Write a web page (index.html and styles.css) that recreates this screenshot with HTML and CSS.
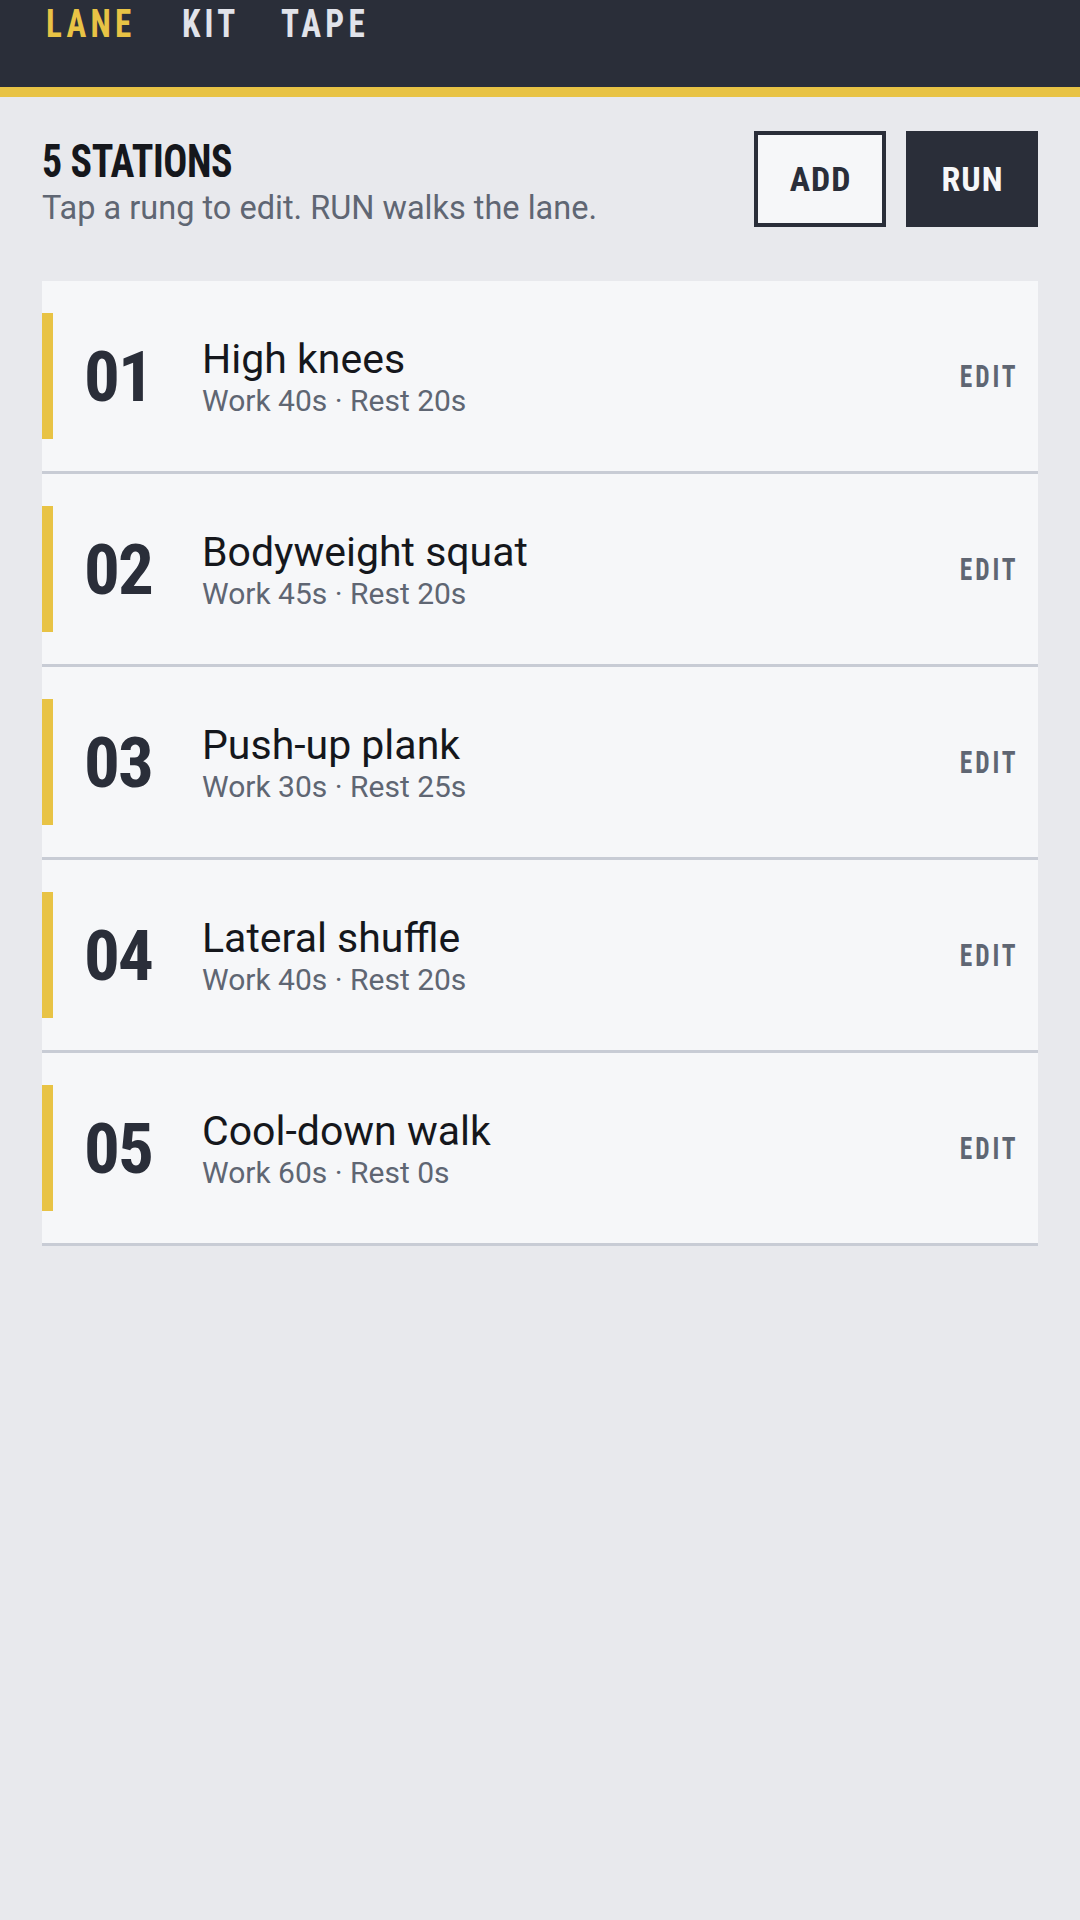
FILE: index.html
```html
<!DOCTYPE html>
<html lang="en">
<head>
<meta charset="utf-8">
<title>Lane</title>
<link rel="stylesheet" href="styles.css">
</head>
<body>
<header class="topbar">
  <nav class="tabs">
    <span class="tab tab-active">LANE</span>
    <span class="tab">KIT</span>
    <span class="tab">TAPE</span>
  </nav>
</header>
<main class="page">
  <section class="toolbar">
    <div class="intro">
      <h1 class="count">5 STATIONS</h1>
      <p class="hint">Tap a rung to edit. RUN walks the lane.</p>
    </div>
    <div class="actions">
      <button class="btn btn-outline">ADD</button>
      <button class="btn btn-solid">RUN</button>
    </div>
  </section>
  <ol class="rungs">
    <li class="rung"><div class="rung-inner"><span class="num">01</span><div class="info"><div class="name">High knees</div><div class="meta">Work 40s · Rest 20s</div></div><span class="edit">EDIT</span></div></li>
    <li class="rung"><div class="rung-inner"><span class="num">02</span><div class="info"><div class="name">Bodyweight squat</div><div class="meta">Work 45s · Rest 20s</div></div><span class="edit">EDIT</span></div></li>
    <li class="rung"><div class="rung-inner"><span class="num">03</span><div class="info"><div class="name">Push-up plank</div><div class="meta">Work 30s · Rest 25s</div></div><span class="edit">EDIT</span></div></li>
    <li class="rung"><div class="rung-inner"><span class="num">04</span><div class="info"><div class="name">Lateral shuffle</div><div class="meta">Work 40s · Rest 20s</div></div><span class="edit">EDIT</span></div></li>
    <li class="rung"><div class="rung-inner"><span class="num">05</span><div class="info"><div class="name">Cool-down walk</div><div class="meta">Work 60s · Rest 0s</div></div><span class="edit">EDIT</span></div></li>
  </ol>
</main>
</body>
</html>
```
FILE: styles.css
```css
* { box-sizing: border-box; }
html, body { margin: 0; padding: 0; }
body {
  background: #e8e9ed;
  font-family: Roboto, "Liberation Sans", sans-serif;
  color: #15171c;
  min-height: 1920px;
}
.topbar {
  height: 97px;
  background: #2a2e39;
  border-bottom: 10px solid #e8c345;
}
.tabs {
  display: flex;
  gap: 31px;
  padding-left: 46px;
  padding-top: 4px;
}
.tab, .count, .btn, .num, .edit {
  font-family: Roboto, "Liberation Sans", sans-serif;
  font-stretch: 75%;
  font-weight: 700;
}
.tab {
  display: inline-block;
  font-size: 39px;
  line-height: 40px;
  letter-spacing: 5px;
  color: #e1e3ea;
  transform: scaleX(0.85);
  transform-origin: left center;
}
.tab-active { color: #e8c345; }
.page { padding: 34px 42px 0; }
.toolbar {
  display: flex;
  justify-content: space-between;
  align-items: flex-start;
}
.count {
  margin: 8px 0 0;
  font-size: 47px;
  line-height: 44px;
  letter-spacing: -0.5px;
  color: #15171c;
  transform: scaleX(0.85);
  transform-origin: left center;
}
.hint {
  margin: 5px 0 0;
  font-size: 32.5px;
  line-height: 40px;
  color: #5f6673;
  font-weight: 400;
}
.actions { display: flex; gap: 20px; }
.btn {
  width: 132px;
  height: 96px;
  font-size: 34px;
  letter-spacing: 1px;
  border: 4px solid #2a2e39;
  padding: 0 0 0 1px;
}
.btn-outline { background: #f6f7f9; color: #2a2e39; }
.btn-solid { background: #2a2e39; color: #f6f7f9; }
.rungs {
  list-style: none;
  margin: 53px 0 0;
  padding: 0;
}
.rung {
  background: #f6f7f9;
  border-bottom: 3px solid #c8ccd5;
  padding: 32px 20px 32px 0;
}
.rung-inner {
  display: flex;
  align-items: center;
  height: 126px;
  border-left: 11px solid #e8c345;
}
.num {
  width: 149px;
  padding-left: 31px;
  padding-top: 1px;
  font-size: 71px;
  line-height: 71px;
  letter-spacing: -2px;
  color: #2a2e39;
}
.info {
  flex: 1;
  padding-top: 4px;
}
.name {
  font-size: 41px;
  line-height: 46px;
  color: #15171c;
}
.meta {
  font-size: 30px;
  line-height: 38px;
  color: #5f6673;
}
.edit {
  display: inline-block;
  font-size: 31px;
  line-height: 31px;
  letter-spacing: 3.5px;
  color: #5f6673;
  transform: scaleX(0.82);
  transform-origin: right center;
}
```
